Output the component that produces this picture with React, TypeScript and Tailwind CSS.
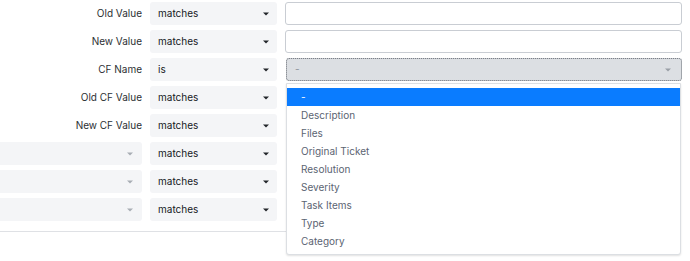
import React from "react";

const Caret = ({ color = "#212529" }: { color?: string }) => (
  <svg width="6" height="4" viewBox="0 0 6 4" className="shrink-0">
    <path d="M0 0.5 H6 L3 3.5 Z" fill={color} />
  </svg>
);

const OpSelect = ({ value }: { value: string }) => (
  <div className="h-[23px] w-[127px] rounded-[3px] bg-[#f4f5f7] flex items-center justify-between pl-[8px] pr-[8px] text-[10px] text-[#16191d]">
    <span>{value}</span>
    <Caret />
  </div>
);

const TextInput = () => (
  <div className="h-[23px] w-[397px] rounded-[3px] border border-[#c9cdd3] bg-white" />
);

const rows = [
  { label: "Old Value", op: "matches" },
  { label: "New Value", op: "matches" },
  { label: "CF Name", op: "is" },
  { label: "Old CF Value", op: "matches" },
  { label: "New CF Value", op: "matches" },
];

const items = [
  "-",
  "Description",
  "Files",
  "Original Ticket",
  "Resolution",
  "Severity",
  "Task Items",
  "Type",
  "Category",
];

export default function App() {
  return (
    <div
      className="relative w-[690px] h-[261px] bg-white overflow-hidden"
      style={{ fontFamily: "Inter, 'Noto Sans', sans-serif" }}
    >
      <div className="pt-[2px] flex flex-col gap-[5px] w-[286px] border-b border-[#dfe1e5] pb-[10px]">
        {rows.map((r) => (
          <div key={r.label} className="flex items-center gap-[8px] h-[23px]">
            <div className="w-[142px] text-right text-[10px] text-[#2b2f33]">{r.label}</div>
            <OpSelect value={r.op} />
          </div>
        ))}
        {[0, 1, 2].map((i) => (
          <div key={i} className="flex items-center gap-[8px] h-[23px]">
            <div className="w-[142px] h-[23px] rounded-r-[3px] bg-[#f4f5f7] flex items-center justify-end pr-[9px]">
              <Caret color="#a8adb4" />
            </div>
            <OpSelect value="matches" />
          </div>
        ))}
      </div>

      <div className="absolute left-[285px] top-[2px] flex flex-col gap-[5px]">
        <TextInput />
        <TextInput />
        <div className="ml-[1px] h-[23px] w-[396px] rounded-[3px] bg-[#dcdfe3] outline-1 outline-dotted outline-[#7d8188] -outline-offset-1 border border-[#c4c8ce] flex items-center justify-between pl-[8px] pr-[10px] text-[10px] text-[#8d939b]">
          <span>-</span>
          <Caret color="#9aa0a7" />
        </div>
      </div>

      <div className="absolute left-[286px] top-[83px] w-[395px] h-[172px] bg-white border border-[#dcdfe3] rounded-b-[3px] shadow-[0_1px_2px_rgba(0,0,0,0.12)] pt-[4px]">
        {items.map((it, i) => (
          <div
            key={it}
            className={
              i === 0
                ? "h-[18px] flex items-center pl-[14px] text-[10px] bg-[#0a7cff] text-white"
                : "h-[18px] flex items-center pl-[14px] text-[10px] text-[#5b6472]"
            }
          >
            {it}
          </div>
        ))}
      </div>
    </div>
  );
}
